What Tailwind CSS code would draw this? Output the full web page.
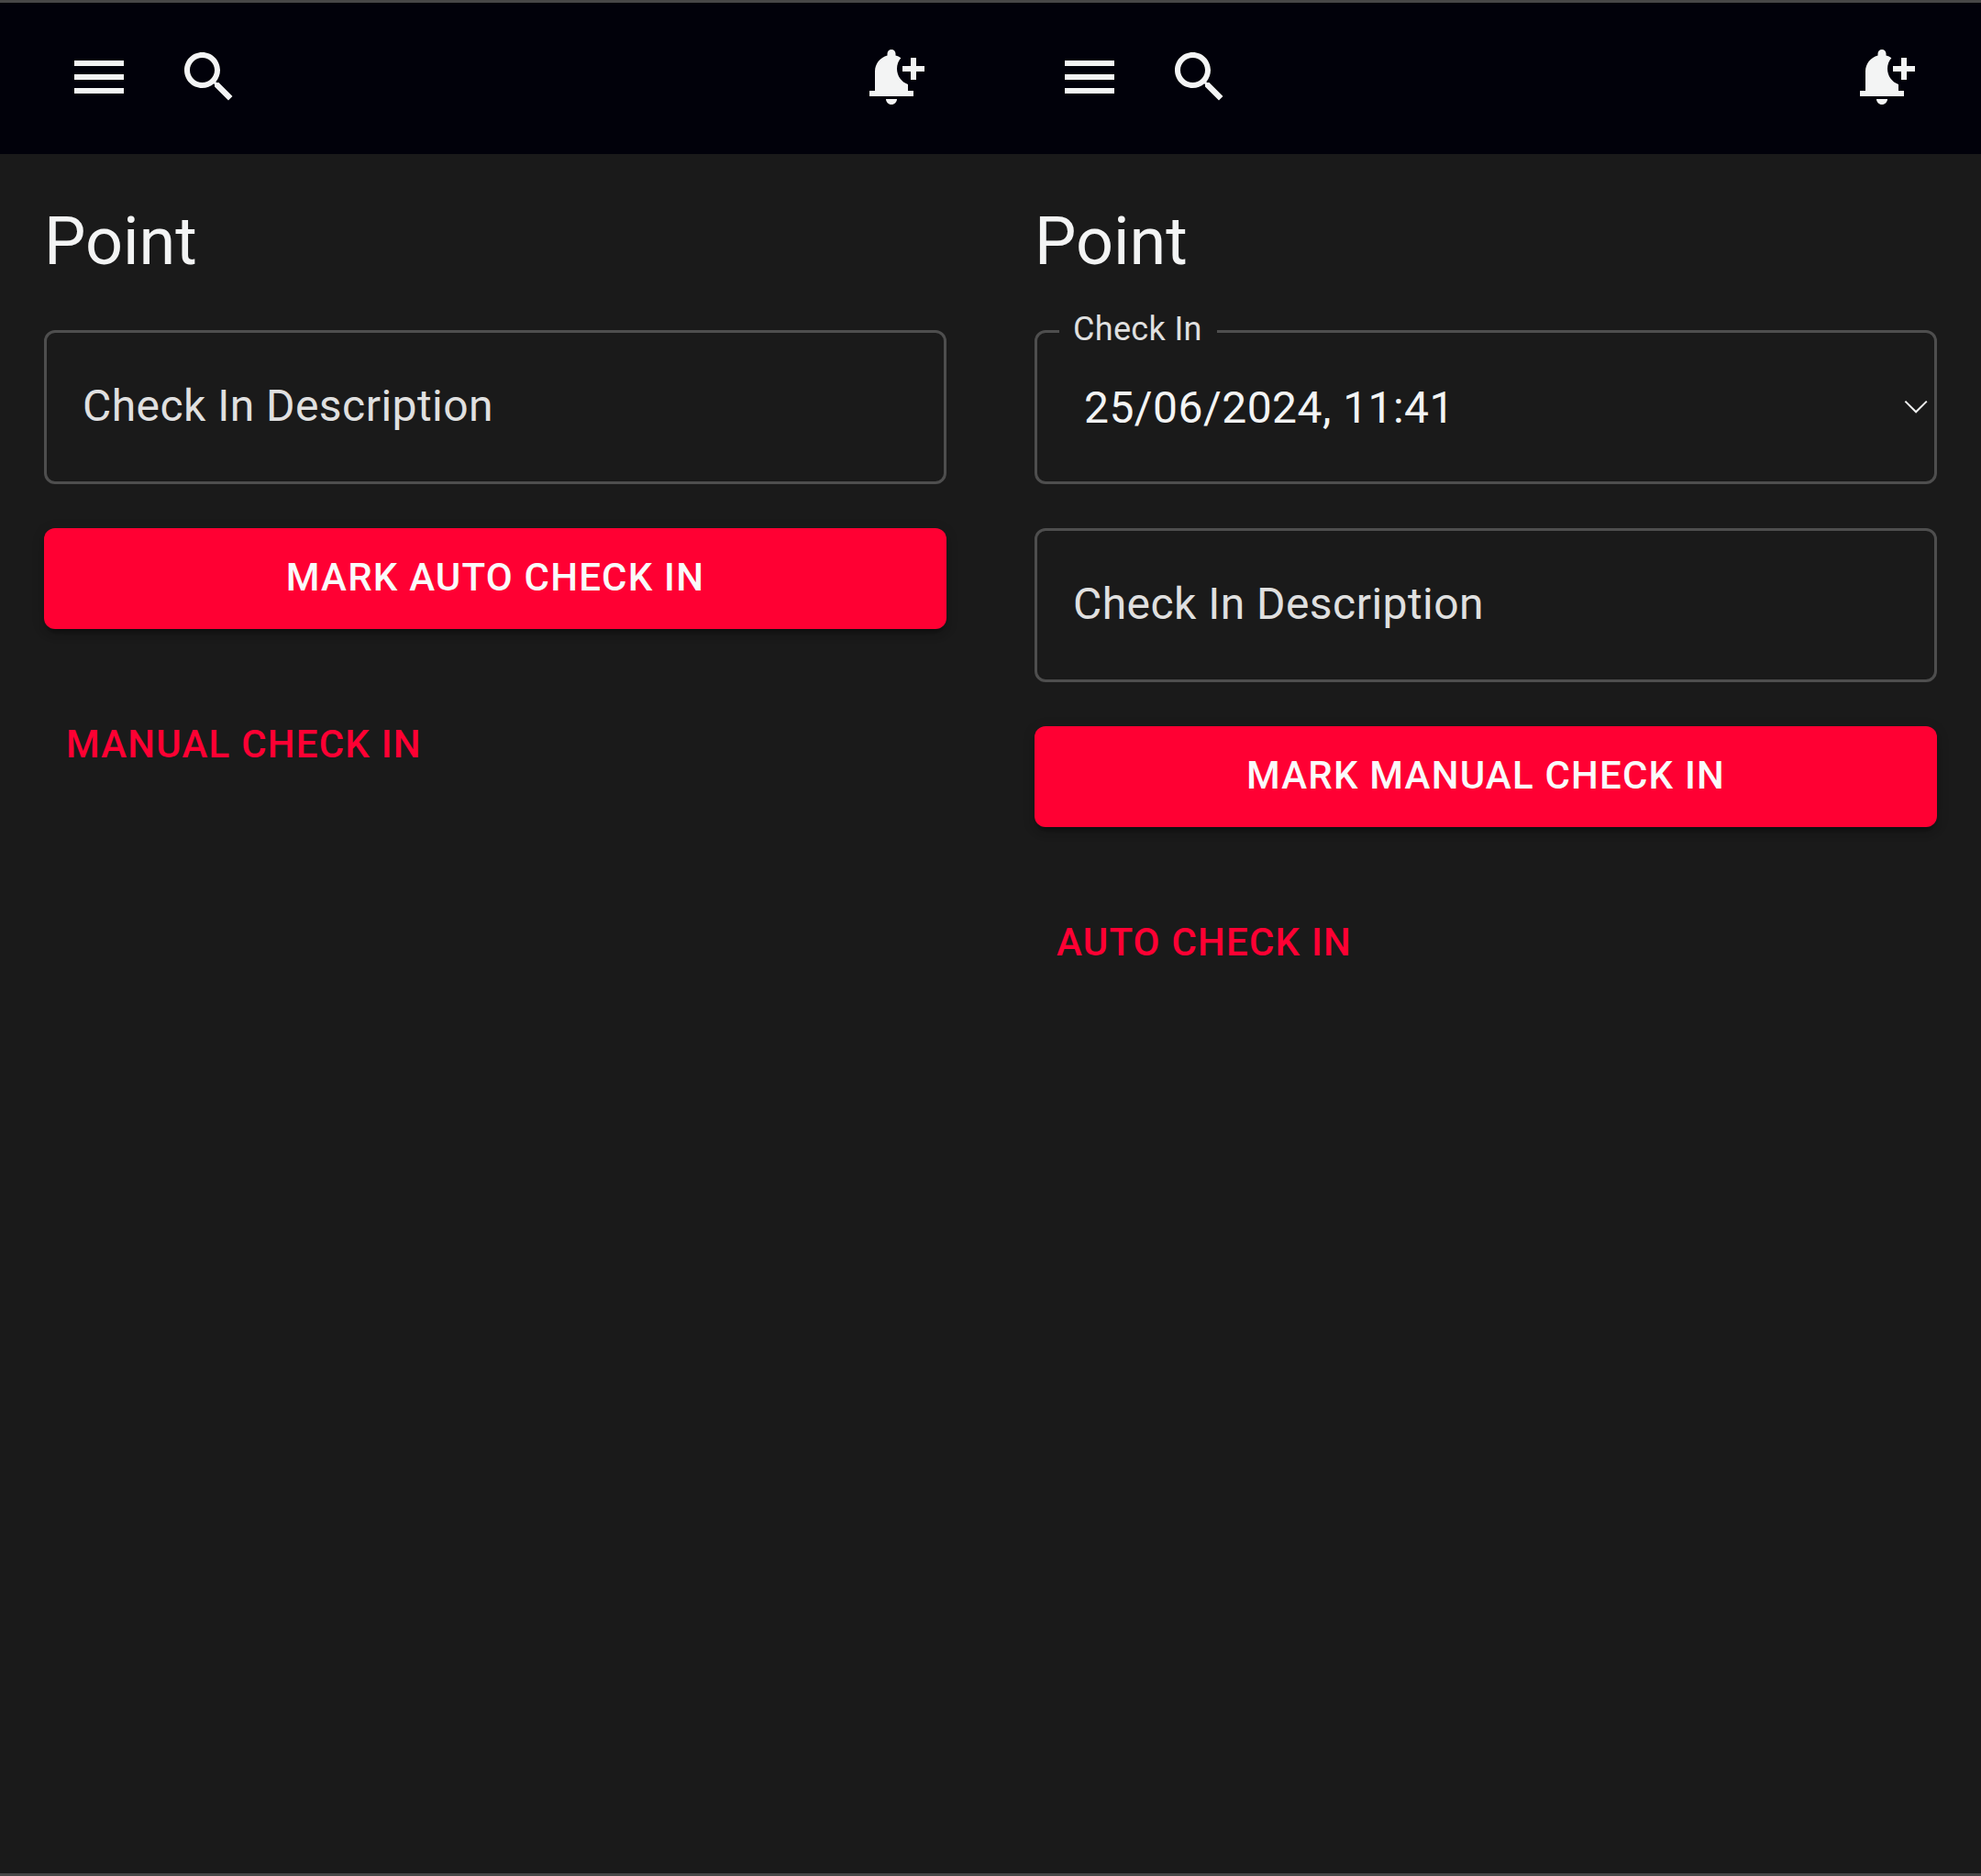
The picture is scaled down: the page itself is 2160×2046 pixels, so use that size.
<!DOCTYPE html>
<html lang="en">
<head>
<meta charset="utf-8">
<title>Point</title>
<script src="https://cdn.jsdelivr.net/npm/@tailwindcss/browser@4"></script>
</head>
<body class="bg-[#1a1a1a]">
<svg class="hidden">
  <symbol id="menu" viewBox="0 0 24 24"><path d="M3 18h18v-2H3v2zm0-5h18v-2H3v2zm0-7v2h18V6H3z"/></symbol>
  <symbol id="search" viewBox="0 0 24 24"><path d="M15.5 14h-.79l-.28-.27C15.41 12.59 16 11.11 16 9.5 16 5.91 13.09 3 9.5 3S3 5.91 3 9.5 5.91 16 9.5 16c1.61 0 3.09-.59 4.23-1.57l.27.28v.79l5 4.99L20.49 19l-4.99-5zm-6 0C7.01 14 5 11.99 5 9.5S7.01 5 9.5 5 14 7.01 14 9.5 11.99 14 9.5 14z"/></symbol>
  <symbol id="bell" viewBox="0 0 24 24"><path d="M10 20h4c0 1.1-.9 2-2 2s-2-.9-2-2zm4-11c0 2.61 1.67 4.83 4 5.66V17h2v2H4v-2h2v-7c0-2.79 1.91-5.14 4.5-5.8v-.7c0-.83.67-1.5 1.5-1.5s1.5.67 1.5 1.5v.7c.71.18 1.36.49 1.95.9C14.54 6.14 14 7.51 14 9zm10-1h-3V5h-2v3h-3v2h3v3h2v-3h3V8z"/></symbol>
</svg>
<div class="grid h-[2046px] w-[2160px] grid-cols-2 border-y-[3px] border-[#474747] font-['Roboto',sans-serif] text-[#f3f4f4]">
  <section>
    <header class="flex h-[165px] items-center bg-[#01010a] px-[72px] pb-[3px]">
      <button class="mr-12"><svg class="size-[72px] fill-[#f3f4f4]"><use href="#menu"/></svg></button>
      <button><svg class="size-[72px] fill-[#f3f4f4]"><use href="#search"/></svg></button>
      <button class="ml-auto"><svg class="size-[72px] fill-[#f3f4f4]"><use href="#bell"/></svg></button>
    </header>
    <main class="flex flex-col items-stretch gap-12 p-12">
      <h1 class="text-[72px] leading-[96px]">Point</h1>
      <div class="h-[168px] rounded-xl border-3 border-[#4e4e4e] px-[39px] pt-[45px] text-[48px] leading-[69px] tracking-[0.45px] text-[#e0e0e0]">Check In Description</div>
      <button class="h-[109.5px] rounded-xl bg-[#ff0033] px-12 pb-[2.5px] text-[42px] leading-[73.5px] font-medium tracking-[1.2px] text-[#fafafa] uppercase shadow-[0_9px_3px_-6px_rgba(0,0,0,0.2),0_6px_6px_0_rgba(0,0,0,0.14),0_3px_15px_0_rgba(0,0,0,0.12)]">Mark Auto Check In</button>
      <button class="mt-6 h-[109.5px] self-start px-6 pb-[1.5px] text-[42px] leading-[73.5px] font-medium tracking-[1.2px] text-[#ff0033] uppercase">Manual Check In</button>
    </main>
  </section>
  <section>
    <header class="flex h-[165px] items-center bg-[#01010a] px-[72px] pb-[3px]">
      <button class="mr-12"><svg class="size-[72px] fill-[#f3f4f4]"><use href="#menu"/></svg></button>
      <button><svg class="size-[72px] fill-[#f3f4f4]"><use href="#search"/></svg></button>
      <button class="ml-auto"><svg class="size-[72px] fill-[#f3f4f4]"><use href="#bell"/></svg></button>
    </header>
    <main class="flex flex-col items-stretch gap-12 p-12">
      <h1 class="text-[72px] leading-[96px]">Point</h1>
      <div class="relative flex h-[168px] items-start justify-between rounded-xl border-3 border-[#4e4e4e] pt-[47px] pr-1 pl-[51px]">
        <label class="absolute -top-[29px] left-6 w-[172px] bg-[#1a1a1a] pl-[15px] text-[36px] leading-[51.75px] tracking-[0.34px] text-[#e0e0e0]">Check In</label>
        <span class="text-[48px] leading-[69px] tracking-[0.45px]">25/06/2024, 11:41</span>
        <svg class="mt-[25px] h-[16px] w-[30px]" viewBox="0 0 30 16" fill="none" stroke="#f3f4f4" stroke-width="2"><path d="M2.4 2.6 14.1 14.3 25.8 2.6"/></svg>
      </div>
      <div class="h-[168px] rounded-xl border-3 border-[#4e4e4e] px-[39px] pt-[45px] text-[48px] leading-[69px] tracking-[0.45px] text-[#e0e0e0]">Check In Description</div>
      <button class="h-[109.5px] rounded-xl bg-[#ff0033] px-12 pb-[2.5px] text-[42px] leading-[73.5px] font-medium tracking-[1.2px] text-[#fafafa] uppercase shadow-[0_9px_3px_-6px_rgba(0,0,0,0.2),0_6px_6px_0_rgba(0,0,0,0.14),0_3px_15px_0_rgba(0,0,0,0.12)]">Mark Manual Check In</button>
      <button class="mt-6 h-[109.5px] self-start px-6 pb-[1.5px] text-[42px] leading-[73.5px] font-medium tracking-[1.2px] text-[#ff0033] uppercase">Auto Check In</button>
    </main>
  </section>
</div>
</body>
</html>
